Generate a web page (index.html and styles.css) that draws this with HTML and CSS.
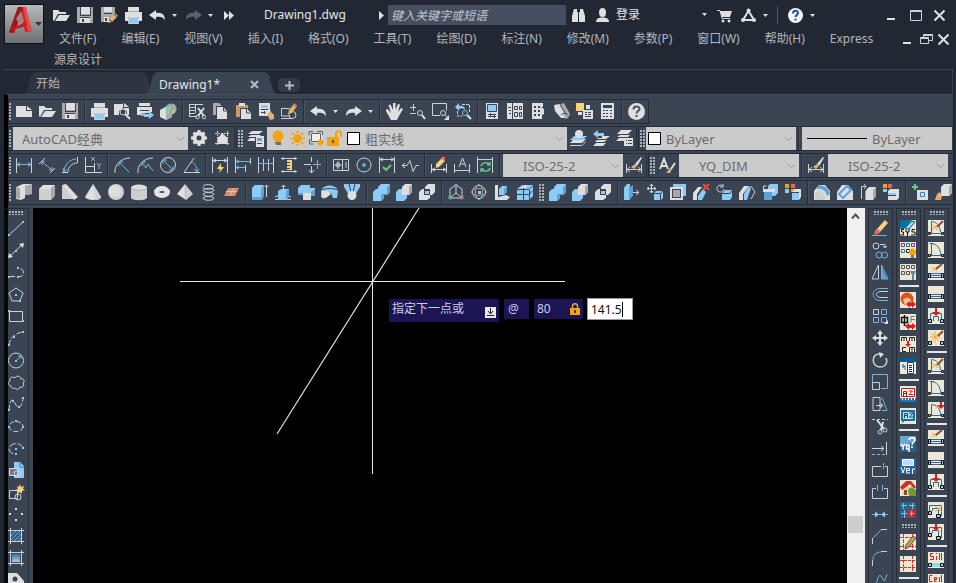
FILE: index.html
```html
<!DOCTYPE html>
<html lang="zh-CN">
<head>
<meta charset="utf-8">
<meta name="viewport" content="width=device-width, initial-scale=1">
<title>Drawing1.dwg</title>
<link rel="stylesheet" href="styles.css">
</head>
<body>
<svg class="sprite" aria-hidden="true">
  <defs>
    <linearGradient id="metal" x1="0" y1="0" x2="0" y2="1"><stop offset="0" stop-color="#b9b9bb"/><stop offset="1" stop-color="#6d6f72"/></linearGradient>
    <linearGradient id="sky" x1="0" y1="0" x2="0" y2="1"><stop offset="0" stop-color="#3d6f98"/><stop offset="1" stop-color="#a9cfe8"/></linearGradient>
  </defs>

  <!-- standard toolbar -->
  <symbol id="new" viewBox="0 0 17 17"><path class="fw" d="M0 3h10v5h6v6H0z"/><path class="fw" d="M11 3l5 4h-5z"/></symbol>
  <symbol id="open" viewBox="0 0 17 17"><path class="fw" d="M0 13V3h5l2 2h6v2H5L1 14z"/><path class="fw" d="M6 8h11l-4 6H2z"/></symbol>
  <symbol id="save" viewBox="0 0 17 17"><path class="fg" d="M0 0h16v16H0z"/><path class="fw" d="M4 0h9v7H4zM3 11h10v5H3z"/><path class="fd" d="M3 0h1v8h9V0h1v9H3zM3 10h10v1H3zM5 12h2v3H5z"/></symbol>
  <symbol id="saveas" viewBox="0 0 17 17"><path class="fg" d="M0 0h14v6l-7 9H0z"/><path class="fw" d="M3 0h8v5H3zM3 10h5v5H3z"/><path class="fd" d="M3 6h8v1H3zM4 11h2v3H4z"/><path class="ft" d="M8 12l6-6 3 3-6 6-4 1z"/><path class="sd" d="M8 12l3 3M13 7l3 3"/></symbol>
  <symbol id="print" viewBox="0 0 17 17"><path class="fw" d="M3 0h11v4H3zM0 5h17v9h-3v-4H3v4H0z"/><path class="fg" d="M3 4h11v1H3z"/><path class="fb" d="M4 11h9v5H4z"/><path class="sw" d="M3.500 10.500h10v6h-10z"/></symbol>
  <symbol id="preview" viewBox="0 0 17 17"><path class="fw" d="M0 1h9v4h6v7h-2V8L9 5 5 8v4H0z"/><path class="fw" d="M10 0l5 4h-5z"/><circle class="sw" cx="9" cy="9" r="3"/><path class="sw2" d="M11 11l5 5"/></symbol>
  <symbol id="publish" viewBox="0 0 17 17"><path class="fw" d="M2 0h11v3H2zM0 4h15v5h-3v1H4v2H0z"/><path class="fd" d="M3 7h9v1H3z"/><path class="fg" d="M4 10h4v3H4z"/><path class="fb" d="M7 11h5V8l5 4-5 4v-2H7z"/></symbol>
  <symbol id="globe" viewBox="0 0 17 17"><path class="fw" d="M0 7l7-4 5 3v8l-6 3-6-3z"/><path class="fg" d="M6 9l6-3v8l-6 3z"/><circle cx="11" cy="6" r="5.500" fill="#8fc9b0"/><path d="M8 3l4-1 1 3-3 3 1 3M14 4l2 3" stroke="#d07b63" fill="none"/><path class="sb" d="M6 5c3-3 6-4 9-3"/></symbol>
  <symbol id="cut" viewBox="0 0 17 17"><path class="sw" d="M0 1.500h14M0 4.500h6M0 7.500h6M0 10.500h6M0 13.500h8M.5 1v13M6.500 1v9"/><path class="sw2" d="M9 5l6 8M15 5l-6 8"/><circle class="sw" cx="8.500" cy="14" r="1.800"/><circle class="sw" cx="15" cy="14" r="1.800"/></symbol>
  <symbol id="copy" viewBox="0 0 17 17"><path class="fg" d="M1 0h6l3 3v9H1z"/><path class="fw" d="M5 4h6l4 4v8H5z"/><path class="sd" d="M4.500 13V3.500h6l1 1v3.500h4"/></symbol>
  <symbol id="paste" viewBox="0 0 17 17"><path d="M1 2h12v12H1z" fill="#c99a68"/><path class="fw" d="M4 0h6v3H4zM6 6h6l4 4v6H6z"/><path class="sd" d="M5.500 16V5.500h7M11.500 6v4h4"/></symbol>
  <symbol id="match" viewBox="0 0 17 17"><path class="fw" d="M1 0h11v13H1z"/><path class="fb" d="M3 2h7v3H3z"/><path class="sd" d="M2.500 6.500h8M3 9.500h5M6.500 8v3"/><path class="ft" d="M9 11l3-3 4 4v4l-4 1z"/><path class="fw" d="M7 9l4-3 2 2-4 3z"/></symbol>
  <symbol id="blockedit" viewBox="0 0 17 17"><path class="sw" d="M.5 5.500h8M.5 5v8h8M0 15.500h10"/><circle class="sw" cx="11.500" cy="12" r="3.500"/><path class="ft" d="M8 7l5-6 3 2-5 7-4 1z"/><path class="fr" d="M13 0l3 2-1 2-3-2z"/></symbol>
  <symbol id="undo" viewBox="0 0 17 17"><path class="fw" d="M0 8l7-5v3c6-1 9 2 9 7-2-3-5-4-9-3v3z"/></symbol>
  <symbol id="redo" viewBox="0 0 17 17"><path class="fw" d="M17 8l-7-5v3c-6-1-9 2-9 7 2-3 5-4 9-3v3z"/></symbol>
  <symbol id="redo-off" viewBox="0 0 17 17"><path d="M17 8l-7-5v3c-6-1-9 2-9 7 2-3 5-4 9-3v3z" fill="#596270"/></symbol>
  <symbol id="caret" viewBox="0 0 7 17"><path class="fw" d="M1 7h5L3.500 10z"/></symbol>
  <symbol id="more" viewBox="0 0 17 17"><path class="fw" d="M3 4l5 4.500L3 13zM8 4l5 4.500L8 13z"/></symbol>
  <symbol id="pan" viewBox="0 0 17 17"><path class="fw" d="M5 17L1 10-.5 7l2-1L5 10 2.500 2l2-.5L7 7V0h2.500v7L12 1l2 .5L12 9l3-4 2 1-4 7-2 4z"/></symbol>
  <symbol id="zoomrt" viewBox="0 0 17 17"><path class="sw" d="M1 4.500h6M4.500 1v7M1 10.500h6"/><circle class="sw" cx="11" cy="10" r="2.500"/><path class="sw2" d="M13 12l3 4"/></symbol>
  <symbol id="zoomwin" viewBox="0 0 17 17"><path class="sw" d="M8 12.500H.5V.5h14v7"/><circle class="sw" cx="11" cy="10" r="2.500"/><path class="sw" d="M13 12l3 3"/><path class="fw" d="M17 12v5h-5z"/></symbol>
  <symbol id="zoomprev" viewBox="0 0 17 17"><path class="fb" d="M0 4l4-4v3c4-1 6 1 6 4-2-2-4-2-6-1v2z"/><path class="sw" d="M7 1.500h8M14.500 2v8M2.500 8v5h5" stroke-dasharray="3 1"/><circle class="sb" cx="10" cy="10" r="2.500"/><path class="sw2" d="M12 12l4 4"/></symbol>
  <symbol id="props" viewBox="0 0 17 17"><path class="fw" d="M2 0h12v16H2z"/><path class="fb" d="M4 2h8v6H4z"/><path class="sd" d="M3.500 1.500h9v7h-9zM4 11.500h8M4 13.500h8M6.500 10v3M10.500 12v3"/></symbol>
  <symbol id="dcenter" viewBox="0 0 17 17"><path class="fw" d="M0 0h5v16H0zM6 0h10v16H6z"/><path class="sd" d="M1 4.500h3M2 7.500h2M2 10.500h2M7.500 3.500h3v3h-3zM12.500 3.500h2v3h-2zM7.500 9.500h3v4h-3zM12.500 9.500h2v4h-2z"/></symbol>
  <symbol id="palettes" viewBox="0 0 17 17"><path class="fw" d="M2 0h11v4h-2l3 2v5l-2 1v4H2z"/><path class="fd" d="M4 3h2v2H4zM8 3h2v2H8zM4 7h2v2H4zM8 7h2v2H8zM4 11h2v2H4zM8 11h2v2H8z"/></symbol>
  <symbol id="sheet" viewBox="0 0 17 17"><path class="fw" d="M1 2l6-1 6 8v6H8L2 8z"/><path class="fg" d="M8 1l3-1 6 11-2 4-3 1z"/><path class="sd" d="M7 2l6 9M8 12c2-2 5-2 7 0"/></symbol>
  <symbol id="markup" viewBox="0 0 17 17"><path class="fy" d="M0 0h8v8H0z"/><path class="fw" d="M2 9h4v3H2zM10 2h4v4h-4zM7 7h10v9H7z"/><path class="sd" d="M9 9.500h2M12 9.500h3M9 11.500h2M12 11.500h3M9 13.500h6"/></symbol>
  <symbol id="calc" viewBox="0 0 17 17"><path class="fw" d="M2 0h13v16H2z"/><path class="fd" d="M4 2h9v3H4zM4 7h2v1H4zM7 7h2v1H7zM11 7h2v1h-2zM4 10h2v1H4zM7 10h2v1H7zM11 10h2v1h-2zM4 13h2v1H4zM7 13h2v1H7zM11 13h2v1h-2z"/></symbol>
  <symbol id="help" viewBox="0 0 17 17"><circle class="fw" cx="8.500" cy="8.500" r="8.500"/><path d="M5.500 6.500c0-4 6-4 6-.5 0 2-3 2.200-3 4.500M8.500 12v2" stroke="#4b5260" stroke-width="2" fill="none"/></symbol>

  <!-- layers -->
  <symbol id="gear" viewBox="0 0 17 17"><circle cx="8" cy="8" r="4.500" stroke="#dfdfdf" stroke-width="4" fill="none"/><path d="M8 0v4M8 12v4M0 8h4M12 8h4M2.500 2.500l3 3M10.500 10.500l3 3M13.500 2.500l-3 3M5.500 10.500l-3 3" stroke="#dfdfdf" stroke-width="3"/></symbol>
  <symbol id="snap" viewBox="0 0 17 17"><path class="sw" d="M3.500 1v15M13.500 1v15M1 3.500h15M1 13.500h15" stroke-dasharray="2 1"/><path class="fw" d="M8.500 3l5 5v6h-10V8z"/></symbol>
  <symbol id="layerprops" viewBox="0 0 17 17"><path class="fw" d="M5 1h11l-4 3H1zM4 5h10l-2 2H1zM3 8h5v3H0z"/><path class="fw" d="M9 6h8v11H9z"/><path class="fm" d="M10 8h5v3h-5z"/><path class="sd" d="M10 13.500h5"/></symbol>
  <symbol id="bulb" viewBox="0 0 17 17"><circle class="fo" cx="8" cy="6" r="5.500"/><path class="fo" d="M5 9h6v3H5z"/><path d="M5 12h6v3H6z" fill="#687078"/></symbol>
  <symbol id="sun" viewBox="0 0 17 17"><circle class="fo" cx="8.500" cy="8.500" r="4.500"/><path class="so" d="M8.500 1v2M8.500 14v2M1 8.500h2M14 8.500h2M3 3l1.500 1.500M12.500 12.500L14 14M14 3l-1.500 1.500M4.500 12.500L3 14"/></symbol>
  <symbol id="vpfreeze" viewBox="0 0 17 17"><path d="M3 3h11v8H3z" fill="#eee"/><path d="M1 5.500V1.500h4M9 1.500h5.500V5M1.500 9v5h4M3.500 3.500h9v8h-9z" stroke="#57606c" fill="none"/><circle class="fo" cx="12.500" cy="12.500" r="3"/></symbol>
  <symbol id="unlock" viewBox="0 0 17 17"><path class="fo" d="M0 7h12v9H0z"/><path d="M9 7V3.500c0-3 5-3 5 0V7" stroke="#f2a20c" stroke-width="2" fill="none"/><path d="M5 10h2v3H5z" fill="#6b521c"/></symbol>
  <symbol id="swatch" viewBox="0 0 17 17"><path d="M1.500 2.500h12v12h-12z" fill="#fff" stroke="#000"/></symbol>
  <symbol id="laycur" viewBox="0 0 17 17"><path class="fw" d="M4 9h12l-4 4H0z"/><path class="fb" d="M4 6h13l-4 4H0z"/><circle class="fw" cx="9" cy="4" r="4"/><path class="sw" d="M0 15.500h12l4-4"/></symbol>
  <symbol id="layprev" viewBox="0 0 17 17"><path class="fb" d="M0 4l5-4v3h6v3H5v2z"/><path class="fw" d="M9 6h8l-4 3H4l1-1h4zM4 10h10l-3 2H2zM3 13h10l-3 3H0z"/></symbol>
  <symbol id="laystate" viewBox="0 0 17 17"><path class="fw" d="M5 0h11l-4 4H1zM4 5h10l-2 2H1zM3 8h5v3H0z"/><path class="fw" d="M8 8h9v8H8z"/><path class="sd" d="M10 10.500h1M12 10.500h4M10 13.500h1M12 13.500h4"/></symbol>

  <!-- dimensions -->
  <symbol id="dlin" viewBox="0 0 17 17"><path class="sw" d="M.5 1v15M15.500 1v15"/><path class="sb" d="M1 7.500h14M4 5.500l-3 2 3 2M12 5.500l3 2-3 2"/></symbol>
  <symbol id="dali" viewBox="0 0 17 17"><path class="sw" d="M0 7l6-6M11 16l5-5"/><path class="sb" d="M3 5l10 8M6 4L3 5v3M13 10v3h-3"/></symbol>
  <symbol id="darc" viewBox="0 0 17 17"><path class="sw" d="M0 15.500h6M15.500 0v6M6 15c0-5 4-9 9-9"/><path class="sb" d="M2 15C2 8 8 2 14 2M1 11l1 4 3-3"/></symbol>
  <symbol id="dord" viewBox="0 0 17 17"><path class="sw" d="M.5 0v15.500H17M.5 9.500H10M9.500 6v10"/><path class="sb" d="M6 0l4 4M10 0L6 4M12 6l2 3 2-3M14 9v3"/></symbol>
  <symbol id="drad" viewBox="0 0 17 17"><path class="sw" d="M1 16C0 8 7 1 16 1"/><path class="sb" d="M5 5l10 10M5 9V5h4"/></symbol>
  <symbol id="djog" viewBox="0 0 17 17"><path class="sw" d="M1 16C0 8 7 1 16 1"/><path class="sb" d="M5 5l4 6 2-4 5 7M5 9V5h4"/></symbol>
  <symbol id="ddia" viewBox="0 0 17 17"><circle class="sw" cx="8" cy="8" r="7.500"/><path class="sb" d="M3 3l10 10M3 7V3h4M9 13h4V9"/></symbol>
  <symbol id="dang" viewBox="0 0 17 17"><path class="sw" d="M11 1L1 15.500h16"/><path class="sb" d="M8 5c4 1 6 4 6 10M11 12l3 3 2-3"/></symbol>
  <symbol id="dquick" viewBox="0 0 17 17"><path class="sw" d="M.5 0v16M15.500 0v16M1 3.500h14M4 2L1 3.500 4 5M12 2l3 1.500L12 5"/><path class="fy" d="M9 6l-4 6h3l-1 4 5-6H9z"/></symbol>
  <symbol id="dbase" viewBox="0 0 17 17"><path class="sw" d="M.5 0v16M10.500 8v7M15.500 1v6"/><path class="sb" d="M1 4.500h14M1 10.500h9M4 3L1 4.500 4 6M4 9l-3 1.500L4 12"/></symbol>
  <symbol id="dcont" viewBox="0 0 17 17"><path class="sw" d="M.5 0v16M5.500 2v12M10.500 2v12M15.500 0v16"/><path class="sb" d="M1 6.500h14"/></symbol>
  <symbol id="dspace" viewBox="0 0 17 17"><path class="sw" d="M0 1.500h16M0 14.500h16M2 0v3M14 0v3M2 13v3M14 13v3"/><path class="fy" d="M6 3h5v10H6z"/><path class="sd" d="M6 5.500h3M6 8.500h3M6 11.500h3"/></symbol>
  <symbol id="dbreak" viewBox="0 0 17 17"><path class="sw" d="M7.500 0v5M7.500 9v7M0 7.500h7M10 7.500h7M5 13l2.500 3 2.500-3"/><path class="sb" d="M13.500 3v9M9 7.500h8"/></symbol>
  <symbol id="tol" viewBox="0 0 17 17"><path class="sw" d="M.5 2.500h15v11H.5zM9.500 2v12"/><circle class="sw" cx="5" cy="8" r="2"/><path class="sw" d="M5 4v8M1.500 8h7M13 5v6"/></symbol>
  <symbol id="cmark" viewBox="0 0 17 17"><circle class="sw" cx="8" cy="8" r="7"/><path class="sb2" d="M8 6v4M6 8h4"/></symbol>
  <symbol id="inspect" viewBox="0 0 17 17"><path class="sw" d="M.5 0v16M15.500 0v16M1 2.500h14M4 1L1 2.500 4 4M12 1l3 1.500L12 4"/><path d="M4 10l3 3 5-5" stroke="#62c98d" stroke-width="2" fill="none"/></symbol>
  <symbol id="jogline" viewBox="0 0 17 17"><path class="sw" d="M0 8.500h5l3-5 3 11 3-6h3M3 6L0 8.500 3 11"/></symbol>
  <symbol id="dedit" viewBox="0 0 17 17"><path class="sw" d="M.5 7v9M15.500 7v9M1 12.500h14M4 11l-3 1.500L4 14M12 11l3 1.500-3 1.500"/><path class="fy" d="M5 7l6-6 3 3-6 6-3 1z"/><path class="fr" d="M11 0h3v3l-1 1-3-3z"/></symbol>
  <symbol id="dtedit" viewBox="0 0 17 17"><path class="sw" d="M.5 7v9M15.500 7v9M1 13.500h14M5 10l3.500-9L12 10M6 7h5"/></symbol>
  <symbol id="dupdate" viewBox="0 0 17 17"><path class="sw" d="M.5 0v16M15.500 0v16M1 2.500h14"/><path d="M4 9c1-4 7-4 9-1M13 5v3h-3M13 11c-1 4-7 4-9 1M4 15v-3h3" stroke="#62c98d" stroke-width="1.500" fill="none"/></symbol>
  <symbol id="dstyle" viewBox="0 0 17 17"><path class="sw" d="M.5 7v9M15.500 7v9M1 12.500h14M4 10l-3 2.500L4 15M12 10l3 2.500-3 2.500"/><path class="fw" d="M9 7l6-7 1 1-5 8z"/><path class="ft" d="M5 10l4-3 2 2-3 3z"/></symbol>
  <symbol id="tstyle" viewBox="0 0 17 17"><path d="M1 12L5 2l4 10M2 9h6" class="sw2"/><path class="sw2" d="M16 6l-4 6"/><path class="ft" d="M7 16l4-5 2 1-2 4z"/></symbol>

  <!-- solids -->
  <symbol id="polysolid" viewBox="0 0 17 17"><path class="fw" d="M0 3l7-3h9v10l-7 1v3l-4 2-5-1z"/><path class="fg" d="M0 3l4 1v11l-4-1zM9 2l7-2v10l-7 1z"/></symbol>
  <symbol id="box" viewBox="0 0 17 17"><path class="fw" d="M0 5l4-4h12l-4 4z"/><path class="fl" d="M0 5h12v11H0z"/><path class="fg" d="M12 5l4-4v11l-4 4z"/></symbol>
  <symbol id="wedge" viewBox="0 0 17 17"><path class="fl" d="M0 1v14h12z"/><path class="fw" d="M0 1l4-1 12 13-4 3z"/></symbol>
  <symbol id="cone" viewBox="0 0 17 17"><path class="fw" d="M8 0L0 13c2 4 14 4 16 0z"/><path class="fl" d="M8 0l3 16c3 0 5-1 5-3z"/></symbol>
  <symbol id="sphere" viewBox="0 0 17 17"><circle class="fl" cx="8" cy="8" r="8"/><circle class="fw" cx="7" cy="7" r="6"/></symbol>
  <symbol id="cyl" viewBox="0 0 17 17"><path class="fl" d="M0 3v11c2 3 14 3 16 0V3z"/><ellipse class="fw" cx="8" cy="3.500" rx="8" ry="3"/><path class="sg" d="M0 4c2 3 14 3 16 0"/></symbol>
  <symbol id="torus" viewBox="0 0 17 17"><ellipse cx="8" cy="8" rx="5.500" ry="3.500" stroke="#e4e4e4" stroke-width="5" fill="none"/></symbol>
  <symbol id="pyr" viewBox="0 0 17 17"><path class="fw" d="M8 0L0 10l9 6z"/><path class="fl" d="M8 0l8 10-7 6z"/></symbol>
  <symbol id="helix" viewBox="0 0 17 17"><path class="sw" d="M3 2c4-3 12-1 10 2-2 2-11 1-10-1M3 6c0 3 11 3 11 0M3 6c2-2 9-2 11 0M3 10c0 3 11 3 11 0M3 10c2-2 9-2 11 0M3 14c0 3 11 3 11 0M3 14c2-2 9-2 11 0"/></symbol>
  <symbol id="planar" viewBox="0 0 17 17"><path d="M5 4h11l-4 8H1z" fill="#d88d66"/><path d="M3 7.500h11M11 4L7 12" stroke="#f0c1a6" fill="none"/></symbol>
  <symbol id="extrude" viewBox="0 0 17 17"><path class="fb" d="M0 4l3-3h9l-2 3z"/><path class="fm" d="M0 4h10l2-3v11l-2 4H0z"/><path class="fb" d="M0 4h9v9H0z"/><path class="sw" d="M14.500 13V1M12.500 3l2-2 2 2"/></symbol>
  <symbol id="presspull" viewBox="0 0 17 17"><path class="sw" d="M0 13l4-2M12 11l4 2M0 15.500h16"/><path class="fb" d="M3 7l3-2h8v8l-3 3H3z"/><path class="fm" d="M11 7l3-2v8l-3 3z"/><path class="sw" d="M8.500 8V1M6.500 3l2-2 2 2"/></symbol>
  <symbol id="sweep" viewBox="0 0 17 17"><path class="fb" d="M0 4l3-3h9v3h5v8h-4v4H5v-5H0z"/><path class="fm" d="M0 9h12l5-4v7h-4v4H5v-5H0z"/><path class="fw" d="M5 9h8v7H5z"/></symbol>
  <symbol id="revolve" viewBox="0 0 17 17"><path class="fb" d="M0 6C3 0 14 0 17 6l-1 8h-4l-2-5H7l-4 6-3-2z"/><path class="fw" d="M1 7h6l3 3-5 4-4-1z"/><path class="sd" d="M0 6c5-2 12-2 17 0"/></symbol>
  <symbol id="loft" viewBox="0 0 17 17"><path class="fb" d="M0 0h16v3l-5 8H5L0 3z"/><path class="sd" d="M5 0l2 8M11 0L9 8"/><circle class="fw" cx="8" cy="11.500" r="4.500"/></symbol>
  <symbol id="union" viewBox="0 0 17 17"><path class="fb" d="M5 3l3-3h9v8l-3 3h-3v3l-3 3H0V8l3-3h2z"/><path class="fm" d="M14 3l3-3v8l-3 3h-3v3l-3 3v-7h6z"/></symbol>
  <symbol id="subtract" viewBox="0 0 17 17"><path class="fb" d="M0 8l3-3h3v6h5v3l-3 3H0z"/><path class="fw" d="M6 3l3-3h7v8l-3 3H6z"/><path class="fg" d="M13 3l3-3v8l-3 3z"/></symbol>
  <symbol id="intersect" viewBox="0 0 17 17"><path class="fw" d="M6 3l3-3h7v8l-3 3h-2v3l-3 2H0V8l3-3h3z"/><path class="fd" d="M5 5h6v6H5z"/><path class="fb" d="M6 7h4v3H6z"/></symbol>
  <symbol id="ucs" viewBox="0 0 17 17"><path class="sw" d="M8 1L2 5v8M8 1l6 4v8M8 3v6l-6 5M8 9l6 5M3 14h10"/><circle class="sb" cx="8" cy="2" r="1.500"/><circle cx="2" cy="13.500" r="1.500" stroke="#6cc59a" fill="none"/><circle cx="14" cy="13.500" r="1.500" stroke="#e08080" fill="none"/></symbol>
  <symbol id="orbit" viewBox="0 0 17 17"><circle class="sw" cx="8" cy="8" r="6.500"/><ellipse cx="8" cy="8" rx="3.500" ry="7.500" stroke="#6cc59a" fill="none"/><ellipse cx="8" cy="8" rx="7.500" ry="3.500" stroke="#d98383" fill="none"/><path class="fb" d="M7 7h3v3H7z"/></symbol>
  <symbol id="flatshot" viewBox="0 0 17 17"><path class="fw" d="M1 1h3v12l8-2 4 2-3 3H1z"/><path class="fb" d="M5 5l3-3h5v6l-3 3H5z"/><path class="fm" d="M10 5l3-3v6l-3 3z"/></symbol>
  <symbol id="slice" viewBox="0 0 17 17"><path class="fb" d="M0 5l5-4h11v11l-4 4H0z"/><path class="sd" d="M0 5.500h12l4-4M12.500 6v10M6.500 1v15M0 10.500h12l4-4"/><path class="fw" d="M7 1h4L8 4H4z"/></symbol>
  <symbol id="extface" viewBox="0 0 17 17"><path class="fb" d="M0 4l3-4h3v16H0z"/><path class="fm" d="M5 4l4-3v11l-4 4z"/><path class="sw" d="M9 8.500h6M12 6l3 2.500-3 2.500"/></symbol>
  <symbol id="moveface" viewBox="0 0 17 17"><path class="sw" d="M4.500 0v9M0 4.500h9M3 2l1.500-2L6 2M3 7l1.500 2L6 7M2 3L0 4.500 2 6M7 3l2 1.500L7 6"/><path class="fb" d="M7 9l2-2h7v7l-2 2H7z"/><path class="sd" d="M7 9.500h7l2-3M13.500 10v6"/></symbol>
  <symbol id="offface" viewBox="0 0 17 17"><path class="fb" d="M3 0h13v12h-3V3H3z"/><path class="fw" d="M0 3h13v13H0z"/><path class="fd" d="M2 5h9v9H2z"/><path class="fg" d="M3 6h7v7H3z"/></symbol>
  <symbol id="delface" viewBox="0 0 17 17"><path class="fw" d="M0 9l5-6h4L4 10v6H0z"/><path class="fb" d="M5 12l5-7 3 3-4 8H5z"/><path d="M10 0l6 6M16 0l-6 6" stroke="#e64a45" stroke-width="2" fill="none"/></symbol>
  <symbol id="rotface" viewBox="0 0 17 17"><path class="sw" d="M7 2C3-1-1 4 2 7c2 2 5 1 6-2M7 0v3H4"/><path class="fb" d="M6 9l3-3h7v7l-2 3H6z"/><path class="sd" d="M6 9.500h8l2-3"/></symbol>
  <symbol id="taperface" viewBox="0 0 17 17"><path class="fw" d="M0 9l5-7h5L4 10v6H0z"/><path class="fb" d="M5 10l5-8 2 2-4 12H5z"/><path class="sw" d="M12 2l4 6-4 7"/></symbol>
  <symbol id="copyface" viewBox="0 0 17 17"><path class="fb" d="M6 2l2-2h8v9l-3 3H6z"/><path class="fw" d="M1 5h12v3H1z"/><path class="fm" d="M2 8h8v8H2z"/><path class="sw" d="M1.500 7V2h3"/></symbol>
  <symbol id="colface" viewBox="0 0 17 17"><path class="fr" d="M6 0h4v4H6z"/><path class="fo" d="M0 0h4v4H0zM6 5h4v3H6z"/><path class="fb" d="M0 5h4v4H0zM7 9h7v7H7z"/><path class="fw" d="M7 8l3-3h6v8l-2 3V8z"/></symbol>
  <symbol id="filedge" viewBox="0 0 17 17"><path class="fw" d="M0 7L5 1h6l5 6v9H0z"/><path class="fm" d="M4 2c6-2 11 3 12 8l-3 2C12 7 8 4 3 5z"/><path class="fl" d="M1 9l4-3c4 1 6 5 6 10H1z"/></symbol>
  <symbol id="chamedge" viewBox="0 0 17 17"><path class="fw" d="M0 8l5-7h6l5 6v9H0z"/><path class="sb2" d="M2 10l8-8 4 4-8 8z"/></symbol>
  <symbol id="copyedge" viewBox="0 0 17 17"><path class="fw" d="M6 6l3-3h7v9l-3 4H6z"/><path class="fg" d="M13 6l3-3v9l-3 4z"/><path class="sw" d="M1.500 15V2.500H6M4 0l2 2.500L4 5"/><path class="sb" d="M5.500 7v9"/></symbol>
  <symbol id="coledge" viewBox="0 0 17 17"><path class="fr" d="M5 0h4v4H5z"/><path class="fo" d="M0 0h4v4H0z"/><path class="fb" d="M0 5h4v3H0zM5 9h9v2H5z"/><path class="fw" d="M5 7l2-2h9v9l-2 2H5v-4h8V9H5z"/></symbol>
  <symbol id="imprint" viewBox="0 0 17 17"><path d="M3 0v6M0 3h6" stroke="#65cb87" stroke-width="2"/><path class="fw" d="M5 6h11v10H5z"/><path class="sm" d="M8.500 8.500h4v4h-4z"/></symbol>
  <symbol id="clean" viewBox="0 0 17 17"><path class="fw" d="M6 3l3-3h8v9l-3 3H6z"/><path class="fg" d="M14 3l3-3v9l-3 3z"/><path class="ft" d="M2 10l3-2 2 4-1 4H0z"/></symbol>

  <!-- draw -->
  <symbol id="line" viewBox="0 0 17 17"><path class="sw" d="M1 15L15 2"/><path class="fb" d="M0 14h2v2H0zM14 1h2v2h-2z"/></symbol>
  <symbol id="xline" viewBox="0 0 17 17"><path class="sw" d="M1 15L15 2"/><path class="fw" d="M0 16l1-5 4 4zM16 1l-5 1 4 4z"/><path class="fb" d="M7 8h2v2H7z"/></symbol>
  <symbol id="pline" viewBox="0 0 17 17"><path class="sw" d="M1 12.500h12c4-2 3-8-2-8" stroke-dasharray="6 2"/><path class="fb" d="M0 12h2v2H0zM9 12h2v2H9zM9 3h2v2H9z"/></symbol>
  <symbol id="polygon" viewBox="0 0 17 17"><path class="sw" d="M8 2l7 5-3 8H4L1 7z"/><path class="fb" d="M7 8h2v2H7zM11 14h2v2h-2z"/></symbol>
  <symbol id="rect" viewBox="0 0 17 17"><path class="sw" d="M1.500 3.500h13v10h-13z"/><path class="fb" d="M0 2h2v2H0zM14 12h2v2h-2z"/></symbol>
  <symbol id="arc" viewBox="0 0 17 17"><path class="sw" d="M1 15C2 8 7 3 15 2" stroke-dasharray="5 2"/><path class="fb" d="M0 14h2v2H0zM5 6h2v2H5zM14 1h2v2h-2z"/></symbol>
  <symbol id="circle" viewBox="0 0 17 17"><circle class="sw" cx="8" cy="8.500" r="7.500"/><path class="sb" d="M9 8l4-4M10 4h3v3"/><path class="fb" d="M7 8h2v2H7z"/></symbol>
  <symbol id="revcloud" viewBox="0 0 17 17"><path class="sw" d="M3 12c-3-1-3-4-1-5-1-4 3-5 5-3 1-3 6-2 6 1 3-1 4 3 2 4 2 3-1 5-3 4-1 3-4 3-5 1-2 1-4 0-4-2z"/></symbol>
  <symbol id="spline" viewBox="0 0 17 17"><path class="sw" d="M1 14C3-2 6 5 8 9s6 3 7-7" stroke-dasharray="5 2"/><path class="fb" d="M0 13h2v2H0zM4 4h2v2H4zM10 10h2v2h-2zM14 1h2v2h-2z"/></symbol>
  <symbol id="ellipse" viewBox="0 0 17 17"><ellipse class="sw" cx="8" cy="8.500" rx="7" ry="5" stroke-dasharray="5 2"/><path class="fb" d="M0 8h2v2H0zM7 2h2v2H7zM14 8h2v2h-2z"/></symbol>
  <symbol id="elarc" viewBox="0 0 17 17"><path class="sw" d="M15 8C13 2 2 2 1 9c0 3 3 5 7 5" stroke-dasharray="7 2"/><path class="fb" d="M7 8h2v2H7zM14 7h2v2h-2zM7 13h2v2H7z"/></symbol>
  <symbol id="insert" viewBox="0 0 17 17"><path class="fb" d="M6 0h6l4 4v12H6z"/><path d="M12 0v5h4" class="sm"/><path d="M1.500 6.500h8v7h-8z" fill="#737b87" stroke="#ddd"/><circle class="sw" cx="9.500" cy="12" r="3.500"/></symbol>
  <symbol id="block" viewBox="0 0 17 17"><path class="sw" d="M1.500 6.500h8v8h-8z"/><circle class="sw" cx="10" cy="13" r="3"/><path class="fy" d="M12 0l1 3 3-1-1 3 2 1-3 1v3l-2-2-3 2 1-3-3-1 3-1-1-3 2 1z"/></symbol>
  <symbol id="point" viewBox="0 0 17 17"><path class="fw" d="M7 2h2v2H7zM1 7h2v2H1zM13 7h2v2h-2zM7 13h2v2H7z"/></symbol>
  <symbol id="hatch" viewBox="0 0 17 17"><path d="M3 3h10v10H3z" fill="#31597c"/><path class="sb" d="M3 8l5-5M3 12l9-9M6 13l7-7M10 13l3-3"/><path class="sw" d="M2.500 0v16M13.500 0v16M0 2.500h16M0 13.500h16"/></symbol>
  <symbol id="gradient" viewBox="0 0 17 17"><path d="M4 4h8v8H4z" fill="url(#sky)"/><path class="sw" d="M2.500 0v16M13.500 0v16M0 2.500h16M0 13.500h16"/></symbol>
  <symbol id="region" viewBox="0 0 17 17"><path class="fw" d="M0 1h9l7 8v8H0z"/><circle class="fd" cx="7" cy="7" r="2.500"/></symbol>

  <!-- modify -->
  <symbol id="erase" viewBox="0 0 17 17"><path class="fy" d="M4 10l9-10 3 3-9 10z"/><path class="fr" d="M3 10l3-1 2 3-2 2-4 1z"/><path class="sb" d="M0 15.500h15"/></symbol>
  <symbol id="mcopy" viewBox="0 0 17 17"><circle class="sw" cx="4" cy="4" r="3"/><circle class="sb" cx="7" cy="13" r="3"/><circle class="sb" cx="12.500" cy="13" r="3"/><path class="sw" d="M8 2.500h5V6M11 4l2 2 2-2"/></symbol>
  <symbol id="mirror" viewBox="0 0 17 17"><path class="sw" d="M6.500 1v14H0z"/><path class="sb" d="M9.500 1v14H16z"/><path class="fm" d="M10 4v11h5z"/></symbol>
  <symbol id="offset" viewBox="0 0 17 17"><path class="sb" d="M16 2.500H8c-9 0-9 12 0 12h8"/><path class="sw" d="M16 5.500H9c-6 0-6 6 0 6h7"/></symbol>
  <symbol id="array" viewBox="0 0 17 17"><path class="sw" d="M1.500 1.500h5v5h-5z"/><path class="sb" d="M9.500 1.500h5v5h-5zM1.500 9.500h5v5h-5zM9.500 9.500h5v5h-5z"/><path class="fw" d="M16 12v4h-4z"/></symbol>
  <symbol id="move" viewBox="0 0 17 17"><path class="sw2" d="M8 2v12M1 8h14"/><path class="fw" d="M8 0l3 4H5zM8 16l3-4H5zM0 8l4-3v6zM16 8l-4-3v6z"/></symbol>
  <symbol id="rotate" viewBox="0 0 17 17"><path class="sw" d="M8 2C-1 1-1 15 8 15c6 0 8-5 6-9" stroke-width="1.500"/><path class="fw" d="M7 0l5 2-4 4z"/></symbol>
  <symbol id="scale" viewBox="0 0 17 17"><path class="sb" d="M.5 8V.5h15v14H9"/><path class="sw" d="M.5 8.500h7v7h-7z"/></symbol>
  <symbol id="stretch" viewBox="0 0 17 17"><path class="sw" d="M1 1.500h7v13H1zM4 9.500h7M8 7l3 2.500L8 12"/><path class="sb" d="M10 1.500l5 13h-5"/></symbol>
  <symbol id="trim" viewBox="0 0 17 17"><path class="sw" d="M0 1.500h16" stroke-dasharray="3 2"/><path class="sw2" d="M5 2l7 9M11 4L9 12"/><circle class="sw" cx="8" cy="14" r="2"/><circle class="sw" cx="13" cy="12" r="2"/></symbol>
  <symbol id="extend" viewBox="0 0 17 17"><path class="sw" d="M14.500 2v13M0 8.500h12M9 6l3 2.500L9 11"/><path class="sg" d="M0 14.500h14" stroke-dasharray="3 2"/></symbol>
  <symbol id="breakpt" viewBox="0 0 17 17"><path class="sw" d="M9 4.500H.5v10h15v-10H13"/><path class="sb" d="M11.500 1v6"/></symbol>
  <symbol id="break" viewBox="0 0 17 17"><path class="sw" d="M4 4.500H.5v10h15v-10H12"/><path class="sb" d="M5.500 1v6M10.500 1v6"/></symbol>
  <symbol id="join" viewBox="0 0 17 17"><path class="sb" d="M0 8.500h16"/><path class="fb" d="M7 8.500l-4-3v6zM9 8.500l4-3v6z"/></symbol>
  <symbol id="chamfer" viewBox="0 0 17 17"><path class="sb" d="M1 10L9 2"/><path class="sw" d="M.5 10v6M9 1.500h6"/></symbol>
  <symbol id="fillet" viewBox="0 0 17 17"><path class="sb" d="M1 10C1 5 4 2 9 2"/><path class="sw" d="M.5 10v6M9 1.500h6"/></symbol>
  <symbol id="blend" viewBox="0 0 17 17"><path class="sb" d="M0 13C6 16 5 0 9 4s2 10 6-2"/></symbol>

  <!-- add-in tiles -->
  <symbol id="tsys" viewBox="0 0 17 17"><path class="tile" d="M0 0h16v16H0z"/><path d="M0 0h12L4 9H0z" fill="#0c6f9c"/><path d="M5 8l7-7 3 1-6 7z" fill="#8fe0f2" stroke="#0c5b86"/><path d="M4 9.500H1.500V12h2v3H0M6 9v3h3V9M7.500 12v4M15 9.500h-3V12h3v3h-4" stroke="#111" fill="none"/></symbol>
  <symbol id="tlay" viewBox="0 0 17 17"><path class="tile" d="M0 0h16v16H0z"/><path d="M1.500 1.500h3v3h-3zM11.500 1.500h3v3h-3z" stroke="#a21fb0" fill="none"/><path d="M6.500 1.500h3v3h-3zM1.500 7.500h3v3h-3z" stroke="#15867a" fill="none"/><path d="M6.500 7.500h3v3h-3z" stroke="#222" fill="none"/><circle class="fo" cx="12.500" cy="10" r="3.500"/><path d="M11 13h3v3h-3z" fill="#777"/></symbol>
  <symbol id="tlay2" viewBox="0 0 17 17"><path class="tile" d="M0 0h16v16H0z"/><path d="M1.500 1.500h3v3h-3zM6.500 1.500h3v3h-3zM11.500 1.500h3v3h-3zM1.500 7.500h3v3h-3zM6.500 7.500h3v3h-3z" stroke="#555" fill="none"/><path d="M10 7h6l-2 4v5h-2v-5z" fill="#6a8795"/></symbol>
  <symbol id="tface" viewBox="0 0 17 17"><path class="tile" d="M0 0h16v16H0z"/><circle cx="7" cy="7" r="6.500" fill="#e0521b"/><path d="M3 8c3-3 5-3 8 0l-1 5H5z" fill="#f6c79a"/><path class="arr" d="M6 12l4-3v2h2V9l4 3-4 4v-2h-2v2z"/></symbol>
  <symbol id="tcn" viewBox="0 0 17 17"><path class="tile" d="M0 0h16v16H0z"/><path d="M1.500 3.500h6v5h-6zM4.500 1v11" stroke="#111" fill="none" stroke-width="1.500"/><path d="M15 2.500h-4v6M11 5.500h4" stroke="#777" fill="none"/><path class="arr" d="M5 12l4-3v2h3V9l4 3-4 4v-2H9v2z"/></symbol>
  <symbol id="tmm" viewBox="0 0 17 17"><path class="tile" d="M0 0h16v16H0z"/><path d="M1.500 5V1.500h5V5M4 2v3M9.500 5V1.500h5V5M12 2v3M6 11.500H2.500v4H6M9.500 16v-4.500h5V16M12 12v4" stroke="#222" fill="none"/><path class="arr" d="M7 5h2v3h2l-3 3-3-3h2z"/></symbol>
  <symbol id="tdoc" viewBox="0 0 17 17"><path class="tile" d="M0 0h16v16H0z"/><path d="M0 0h16v4H0z" fill="#0b5c94"/><path d="M7.500 4.500h6v11h-6z" stroke="#0b4c7c" fill="#fff"/><path d="M9 7.500h3M9 9.500h3M9 11.500h3M9 13.500h3" stroke="#222"/><path d="M5 12V8H2M4 6L2 8l2 2" stroke="#1c70b8" fill="none"/></symbol>
  <symbol id="taz" viewBox="0 0 17 17"><path class="tile" d="M0 0h16v16H0z"/><path d="M1.500 2.500h13v8h-13z" fill="#fff" stroke="#d11"/><path d="M3.500 10V5.500h3V10M3.500 7.500h3M8.500 5h4L9 8.500h4" stroke="#b11" fill="none"/><path d="M0 12h16v4H0z" fill="#1779c4"/><path d="M2.500 12v2M5.500 12v2M8.500 12v2M11.500 12v2M14.500 12v2" stroke="#fff"/></symbol>
  <symbol id="taz2" viewBox="0 0 17 17"><path class="tile" d="M0 0h16v16H0z"/><path d="M2 3h12v9H2z" fill="#b9e1f5" stroke="#1b6fa8" stroke-width="2"/><path d="M4.500 10V5.500h3V10M4.500 7.500h3M9 5h4L9.500 9H13M2 15l4-4" stroke="#174a70" fill="none"/></symbol>
  <symbol id="tyq" viewBox="0 0 17 17"><path d="M0 0h16v16H0z" fill="#285f95"/><path d="M0 0h16v5L0 11z" fill="#6ea6d4"/><path d="M9 4c0-3 6-3 6 0 0 2-3 2-3 5M12 10v2M1 8l2 3 2-3M3 11v3M9 9H6.500v4H9V8.500V16" stroke="#fff" stroke-width="1.500" fill="none"/></symbol>
  <symbol id="tver" viewBox="0 0 17 17"><path d="M0 0h16v16H0z" fill="#1c64a5"/><path d="M2.500 1.500h11v6h-11z" fill="#bcdcf2" stroke="#fff"/><path d="M1 9l2 6 2-6M10 12.500H6.500V15H10M6.500 12V10.500h3v2M12.500 16v-5H15" stroke="#fff" fill="none"/></symbol>
  <symbol id="thome" viewBox="0 0 17 17"><path class="tile" d="M0 0h16v16H0z"/><path d="M2 8l4-4 5 4v7H2z" fill="#e7d4ae"/><path d="M0 7l6-6h5l5 6-2 2-4-5-8 6z" fill="#c83321"/><path d="M8 10l3-3 5 3v6H9z" fill="#6f9936"/><path d="M4 10h3v5H4z" fill="#8f4c2a"/></symbol>
  <symbol id="tgrid" viewBox="0 0 17 17"><path d="M0 0h16v16H0z" fill="#2c6288"/><path d="M8 8h7v7H8z" fill="#c82d32"/><path d="M1 3.500h6M3.500 1v6M9 3.500h6M12.500 1v6M1 11.500h6M4.500 8v8" stroke="#8cbcd8"/><path d="M10 11.500h4M11.500 9v5" stroke="#e9a6a6"/></symbol>
  <symbol id="tpen" viewBox="0 0 17 17"><path class="tile" d="M0 0h16v16H0z"/><path d="M3.500 0v16M12.500 0v16M0 3.500h16M0 12.500h16" stroke="#e0332c" stroke-dasharray="4 1"/><path d="M6 11l7-9 3 2-7 9-4 2z" fill="#c9a04c" stroke="#555"/></symbol>
  <symbol id="taxis" viewBox="0 0 17 17"><path class="tile" d="M0 0h16v16H0z"/><path d="M3.500 0v16M12.500 0v16M0 4.500h16M0 11.500h16" stroke="#dd2a25" stroke-dasharray="3 1"/></symbol>
  <symbol id="wdoor" viewBox="0 0 17 17"><path class="tile" d="M0 0h16v16H0z"/><path class="wall" d="M3.500 14V1.500C9 2 12 6 12.500 12M3 13.500h10"/><path class="star" d="M4 5l6 5M10 4l-6 6"/><path d="M9 7l6-6" stroke="#914b25" stroke-width="2"/><path class="blk" d="M.5 12.500h2v2h-2zM13.500 12.500h2v2h-2z"/></symbol>
  <symbol id="door" viewBox="0 0 17 17"><path class="tile" d="M0 0h16v16H0z"/><path class="wall" d="M3.500 14V1.500C9 2 12 6 13 13M1.500 1.500H6M4 13.500h9"/><path class="blk" d="M.5 12.500h2v2h-2zM13.500 12.500h2v2h-2z"/></symbol>
  <symbol id="wwin" viewBox="0 0 17 17"><path class="tile" d="M0 0h16v16H0z"/><path class="wall" d="M2 9.500h12M2 11.500h12M2 13.500h12"/><path class="star" d="M4 3l5 4M9 3L4 7"/><path d="M8 5l6-5" stroke="#914b25" stroke-width="2"/><path class="blk" d="M.5 9.500h2v4h-2zM13.500 9.500h2v4h-2z"/></symbol>
  <symbol id="win" viewBox="0 0 17 17"><path class="tile" d="M0 0h16v16H0z"/><path class="wall" d="M2 8.500h12M2 10.500h12M2 12.500h12"/><path class="blk" d="M.5 8.500h2v4h-2zM13.500 8.500h2v4h-2z"/></symbol>
  <symbol id="bay" viewBox="0 0 17 17"><path class="tile" d="M0 0h16v16H0z"/><path class="wall" d="M2.500 13V5.500h11V13M5.500 13V8.500h5V13"/><path class="arr" d="M7 0h2v4h3L8 8 4 4h3z"/><path class="blk" d="M.5 11.500h3v3h-3zM12.500 11.500h3v3h-3z"/></symbol>
  <symbol id="spark" viewBox="0 0 17 17"><path class="tile" d="M0 0h16v16H0z"/><path class="star" d="M3 3l8 8M11 3l-8 8M7 1v12M2 7h10"/><path d="M10 6l5-5" stroke="#914b25" stroke-width="2"/><path class="blk" d="M.5 11.500h3v3h-3zM12.500 11.500h3v3h-3z"/></symbol>
  <symbol id="doorred" viewBox="0 0 17 17"><path class="tile" d="M0 0h16v16H0z"/><path class="wall" d="M3.500 14V2.500C9 3 12 6 13 14M4 13.500h9"/><path class="arr" d="M12 0h2v3h3l-4 4-4-4h3z"/><path class="blk" d="M.5 12.500h2v2h-2zM13.500 12.500h2v2h-2z"/></symbol>
  <symbol id="corner" viewBox="0 0 17 17"><path class="tile" d="M0 0h16v16H0z"/><path class="wall" d="M1.500 9V3.500h12V14M4.500 9V6.500h6V13"/><path class="star" d="M7 4l7 6M14 4L7 10"/><path class="blk" d="M.5 9.500h3v3h-3zM8.500 12.500h4v3h-4z"/></symbol>
  <symbol id="cornerred" viewBox="0 0 17 17"><path class="tile" d="M0 0h16v16H0z"/><path class="wall" d="M1.500 9V3.500h12V14M4.500 9V6.500h6V13"/><path class="arr" d="M7 0h2v3h3L8 7 4 3h3z"/><path class="blk" d="M.5 9.500h3v3h-3zM8.500 12.500h4v3h-4z"/></symbol>
  <symbol id="sill" viewBox="0 0 17 17"><path class="tile" d="M0 0h16v16H0z"/><path d="M5 1.500H2.500v3h3v3H2M8.500 4v4M8.500 1v1M11.500 1v7M13.500 1v7" stroke="#d02020" fill="none"/><path d="M3 11h10v4H3z" fill="#8fd8ee"/><path class="blk" d="M.5 11.500h3v3h-3zM12.500 11.500h3v3h-3z"/></symbol>
  <symbol id="ceil" viewBox="0 0 17 17"><path class="tile" d="M0 0h16v16H0z"/><path d="M4.500 1.500h-3v6h3M8.500 7.500h-2v-4h2v2h-2M11.500 3v5M13.500 1v7" stroke="#d02020" fill="none"/></symbol>

  <!-- title bar -->
  <symbol id="binoc" viewBox="0 0 17 17"><path class="fw" d="M4 2h3v3h1v10H2V9zM13 2h-3v3H9v10h6V9z"/><path d="M8 5h1v10H8z" fill="#222833"/></symbol>
  <symbol id="user" viewBox="0 0 17 17"><ellipse class="fw" cx="8.500" cy="5.500" rx="3.500" ry="4.500"/><path class="fw" d="M2 15c0-3 2-4 5-4.500h3c3 .5 5 1.500 5 4.500z"/></symbol>
  <symbol id="cart" viewBox="0 0 17 17"><path class="sw" d="M1 3.500h3l2 8h8"/><path class="fw" d="M4 4h12l-2 6H6z"/><circle class="fw" cx="7" cy="14" r="1.500"/><circle class="fw" cx="13" cy="14" r="1.500"/></symbol>
  <symbol id="nodes" viewBox="0 0 17 17"><path class="sw2" d="M8.500 4L3 13h11z"/><circle class="fw" cx="8.500" cy="3.500" r="2"/><circle class="fw" cx="3" cy="13" r="2"/><circle class="fw" cx="14" cy="13" r="2"/></symbol>
  <symbol id="helpblue" viewBox="0 0 17 17"><circle fill="#f1f5fb" cx="8.500" cy="8.500" r="7.500"/><path d="M6 6.500C6 3 11 3 11 6c0 2-2.500 2.200-2.500 4M8.500 11.500v2" stroke="#2d4f94" stroke-width="2" fill="none"/></symbol>
  <symbol id="min" viewBox="0 0 17 17"><path class="fw" d="M4 11h8v2H4z"/></symbol>
  <symbol id="max" viewBox="0 0 17 17"><path class="sw" d="M3.500 4.500h11v9h-11zM3 3.500h12"/></symbol>
  <symbol id="restore" viewBox="0 0 17 17"><path class="sw" d="M6.500 6V3.500h9v6h-4M3.500 7.500h8v5h-8zM3 6.500h9M6 4.500h9"/></symbol>
  <symbol id="close" viewBox="0 0 17 17"><path class="sw2" d="M3.500 3.500l10 10M13.500 3.500l-10 10"/></symbol>
  <symbol id="chev" viewBox="0 0 9 9"><path d="M1 3l3.500 3.500L8 3" stroke="#999" fill="none"/></symbol>
</svg>

<header class="header">
  <button class="logo" aria-label="应用程序菜单">
    <svg width="38" height="38" viewBox="0 0 38 38"><path d="M0 0h38v38H0z" fill="url(#metal)"/><path d="M13 2h7l7 25h-7L16 11 9 28H4z" fill="#d0282d"/><path d="M13 2h5l-3 9-6 17-5-1z" fill="#a3161c"/><path d="M18 2l3 0 6 25-4-1z" fill="#e8494b"/><path d="M5 24l16-7 1 4-15 4z" fill="#c31f25"/><path d="M11 14l5-8 3 11-5 1z" fill="#8d9093"/><path d="M14 15l3-4 1 5z" fill="#e2605c"/><path d="M30 17h7l-3.500 4z" fill="#333"/></svg>
  </button>
  <div class="header-main">
    <div class="titlebar">
      <div class="qat" data-tools="open save saveas print undo v redo-off v more"></div>
      <h1 class="title">Drawing1.dwg</h1>
      <div class="infocenter">
        <svg class="play" width="5" height="9" viewBox="0 0 5 9"><path class="fw" d="M0 0l5 4.500L0 9z"/></svg>
        <input class="search" type="search" aria-label="搜索" placeholder="键入关键字或短语">
        <div class="qat" data-tools="binoc user"></div>
        <button class="login"><span>登录</span><svg width="7" height="17"><use href="#caret"/></svg></button>
        <div class="qat" data-tools="cart nodes v"></div>
        <span class="divider"></span>
        <div class="qat" data-tools="helpblue v"></div>
      </div>
      <div class="qat window" data-tools="min max close"></div>
    </div>
    <nav class="menu">
      <button>文件(F)</button><button>编辑(E)</button><button>视图(V)</button><button>插入(I)</button><button>格式(O)</button><button>工具(T)</button><button>绘图(D)</button><button>标注(N)</button><button>修改(M)</button><button>参数(P)</button><button>窗口(W)</button><button>帮助(H)</button><button>Express</button>
      <div class="docwin" data-tools="min restore close"></div>
    </nav>
    <nav class="menu menu-extra"><button>源泉设计</button></nav>
  </div>
</header>

<div class="frame">
  <nav class="tabs">
    <button class="tab">开始</button>
    <div class="tab tab-active"><button>Drawing1*</button><button class="tab-close" aria-label="关闭"><svg width="9" height="9" viewBox="0 0 9 9"><path d="M1 1l7 7M8 1L1 8" stroke="#b5bac2" stroke-width="2"/></svg></button></div>
    <button class="tab-add" aria-label="新图形"><svg width="9" height="9" viewBox="0 0 9 9"><path d="M4.500 0v9M0 4.500h9" stroke="#b5bac2" stroke-width="2"/></svg></button>
  </nav>

  <div class="toolbars">
    <div class="row">
      <div class="bar" data-tools=": new open save | print preview publish globe | cut copy paste match blockedit | undo v redo v | pan zoomrt zoomwin zoomprev | props dcenter palettes sheet markup calc | help"></div>
    </div>
    <div class="row">
      <div class="bar"><i class="grip"></i>
        <div class="combo combo-space"><select aria-label="工作空间"><option>AutoCAD经典</option></select><svg class="chev"><use href="#chev"/></svg></div>
        <div class="set" data-tools="gear snap"></div>
      </div>
      <div class="bar"><i class="grip grip-wide"></i>
        <div class="set" data-tools="layerprops"></div>
        <div class="combo combo-layer"><svg width="17" height="17"><use href="#bulb"/></svg><svg width="17" height="17"><use href="#sun"/></svg><svg width="17" height="17"><use href="#vpfreeze"/></svg><svg width="17" height="17"><use href="#unlock"/></svg><svg width="17" height="17"><use href="#swatch"/></svg><select aria-label="图层"><option>粗实线</option></select><svg class="chev"><use href="#chev"/></svg></div>
        <div class="set" data-tools="laycur layprev laystate"></div>
      </div>
      <div class="bar bar-open"><i class="grip grip-wide"></i>
        <div class="combo combo-color"><svg width="17" height="17"><use href="#swatch"/></svg><select aria-label="颜色"><option>ByLayer</option></select><svg class="chev"><use href="#chev"/></svg></div>
        <i class="sep"></i>
        <div class="combo combo-ltype"><i class="ltype"></i><select aria-label="线型"><option>ByLayer</option></select></div>
      </div>
    </div>
    <div class="row">
      <div class="bar"><i class="grip"></i>
        <div class="set" data-tools="dlin dali darc dord | drad djog ddia dang | dquick dbase dcont dspace dbreak | tol cmark inspect jogline | dedit dtedit dupdate |"></div>
        <div class="combo combo-style"><select aria-label="标注样式"><option>ISO-25-2</option></select><svg class="chev"><use href="#chev"/></svg></div>
        <div class="set" data-tools="dstyle"></div>
      </div>
      <div class="bar bar-open"><i class="grip grip-wide"></i>
        <div class="set" data-tools="tstyle"></div>
        <div class="combo combo-style"><select aria-label="文字样式"><option>YQ_DIM</option></select><svg class="chev"><use href="#chev"/></svg></div>
        <div class="set" data-tools="| dstyle"></div>
        <div class="combo combo-style"><select aria-label="标注样式"><option>ISO-25-2</option></select><svg class="chev"><use href="#chev"/></svg></div>
      </div>
    </div>
    <div class="row">
      <div class="bar bar-open" data-tools=": polysolid box wedge cone sphere cyl torus pyr helix planar | extrude presspull sweep revolve loft | union subtract intersect | ucs orbit flatshot slice :: union subtract intersect | extface moveface offface delface rotface taperface copyface colface | filedge chamedge copyedge coledge | imprint clean"></div>
    </div>
  </div>

  <main class="work">
    <div class="column column-left" data-tools=": line xline pline polygon rect arc circle revcloud spline ellipse elarc insert block point hatch gradient region"></div>
    <section class="canvas">
      <svg class="drawing" role="img" aria-label="图形"><path d="M147 73.500H532M339.500 0V266" stroke="#e8e8e8"/><path d="M386 0L244 226" stroke="#e0e0e0" stroke-width="1.200"/></svg>
      <div class="prompt">
        <div class="prompt-box prompt-text"><span>指定下一点或</span><svg width="11" height="11" viewBox="0 0 11 11"><path d="M0 0h11v11H0z" fill="#e8e8ee"/><path d="M5.500 1v5M3 4l2.500 3L8 4M2 8.500h7" stroke="#222" fill="none"/></svg></div>
        <div class="prompt-box prompt-at">@</div>
        <div class="prompt-box prompt-len"><span>80</span><svg width="10" height="12" viewBox="0 0 10 12"><path d="M2.500 5V3c0-3 5-3 5 0v2" stroke="#e8a33a" stroke-width="1.500" fill="none"/><path d="M0 5h10v7H0z" fill="#f2a50f"/><path d="M4 7h2v3H4z" fill="#50380a"/></svg></div>
        <input class="prompt-input" aria-label="角度" value="141.5">
        <i class="cursor"></i>
      </div>
    </section>
    <div class="scroll"><button class="scroll-up" aria-label="向上滚动"><svg width="9" height="7" viewBox="0 0 9 7"><path d="M1 5.500l3.500-4 3.500 4" stroke="#555" stroke-width="2" fill="none"/></svg></button><i class="thumb"></i></div>
    <div class="column" data-tools=": erase mcopy mirror offset array move rotate scale stretch trim extend breakpt break join chamfer fillet blend"></div>
    <div class="column column-tiles" data-tools=": tsys tlay tlay2 | tface tcn tmm tdoc | taz taz2 | tyq tver thome tgrid :: tpen taxis |"></div>
    <div class="column column-tiles column-last" data-tools=": wdoor door wwin win bay spark | wdoor door doorred | wwin win bay | corner cornerred | sill ceil"></div>
  </main>
</div>
<script src="app.js"></script>
</body>
</html>
```
FILE: styles.css
```css
* { box-sizing: border-box; }
html, body { height: 100%; margin: 0; }
body {
  display: flex; flex-direction: column; overflow: hidden;
  background: #222833; color: #b2b5bb;
  font: 12px/18px "Noto Sans", "Noto Sans CJK SC", sans-serif;
}
button, input, select { font: inherit; color: inherit; border: 0; background: none; padding: 0; margin: 0; border-radius: 0; }
svg { display: block; flex: none; }
.sprite { position: absolute; width: 0; height: 0; }

/* icon paints */
.fw { fill: #dfdfdf; } .fl { fill: #cfcfcf; } .fg { fill: #a9a9a9; } .fd { fill: #3b4453; }
.fb { fill: #8ccbf5; } .fm { fill: #5ba3d6; } .fo { fill: #f5a20f; } .fy { fill: #fbd277; }
.fr { fill: #e8655a; } .ft { fill: #e0b070; }
.sw, .sw2, .sb, .sb2, .sg, .sd, .so, .sm { fill: none; }
.sw { stroke: #ccd1d8; } .sw2 { stroke: #e0e0e0; stroke-width: 2; }
.sb { stroke: #76b4e0; } .sb2 { stroke: #5aa5dc; stroke-width: 2; } .sm { stroke: #3186c6; }
.sg { stroke: #aab0b8; } .sd { stroke: #3b4453; } .so { stroke: #f5a20f; stroke-width: 2; }
.tile { fill: #ece8d6; } .arr { fill: #dc1c1c; }
.wall, .star { fill: none; }
.wall { stroke: #35679c; } .star { stroke: #f0a838; }
.blk { fill: #a8c4ea; stroke: #0b0f18; }

.header { display: flex; flex: none; }
.logo { width: 40px; height: 40px; margin: 4px 5px 0 4px; border: 1px solid #0c0e12; flex: none; }
.header-main { flex: 1; min-width: 0; }
.titlebar { display: flex; align-items: center; height: 30px; padding-right: 5px; }
.qat, .docwin { display: flex; }
.qat button { width: 24px; padding-left: 4px; }
.qat .mini { width: 12px; padding-left: 2px; }
.title { width: 115px; margin: 0 0 0 23px; font-size: 12px; font-weight: 400; color: #e3e5e8; }
.infocenter { display: flex; align-items: center; }
.play { margin-right: 4px; }
.search { width: 178px; height: 20px; padding-left: 3px; background: #464f60; color: #c3c8d0; font-style: italic; }
.search::placeholder { color: #c3c8d0; opacity: 1; }
.login { display: flex; justify-content: space-between; width: 92px; margin: 0 4px 0 2px; color: #e3e5e8; }
.divider { width: 1px; height: 18px; margin: 0 5px; background: #4d5563; }
.window { margin-left: auto; }

.menu { display: flex; align-items: center; gap: 25px; height: 18px; padding: 0 3px 0 10px; white-space: nowrap; }
.menu-extra { height: 21px; padding-left: 5px; align-items: flex-end; }
.docwin { flex: none; margin-left: auto; }
.docwin button { width: 18px; }

.frame { flex: 1; min-height: 0; display: flex; flex-direction: column; margin: 0 3px 0 4px; border: solid #3b4453; border-width: 1px 1px 0 0; }
.tabs { display: flex; height: 24px; padding-left: 20px; align-items: flex-end; }
.tab { width: 130px; height: 22px; padding: 2px 0 0 12px; text-align: left; background: #2e3541; clip-path: polygon(0 100%, 3px 85%, 7px 12%, 11px 0, 119px 0, 123px 12%, 127px 85%, 100% 100%); }
.tab-active { display: flex; align-items: center; margin-left: -8px; padding: 3px 17px 0 13px; justify-content: space-between; background: #3b4453; color: #e3e5e8; }
.tab-add { display: flex; align-items: center; justify-content: center; width: 22px; height: 14px; margin: 0 0 2px 2px; border-radius: 5px; background: #343b48; }

.toolbars { background: #3b4453; border-left: 4px solid #000; padding-top: 4px; height: 114px; overflow: hidden; border-top: 1px solid #434c5b; flex: none; }
.row { display: flex; gap: 1px; margin-bottom: 2px; }
.bar { display: flex; align-items: center; height: 25px; border: 1px solid #262d39; flex: none; }
.bar-open { flex: 1 0 0; min-width: 0; overflow: hidden; border-right: 0; }
.set { display: flex; }
.bar button { width: 23px; height: 23px; padding-left: 3px; flex: none; }
.bar .mini { width: 12px; padding-left: 2px; }
.sep { width: 2px; height: 23px; margin: 0 2px; background: #262d39; border-right: 1px solid #4b5464; flex: none; }
.grip { width: 3px; height: 17px; margin-right: 1px; flex: none; background: radial-gradient(circle at 1px 1px, #aab1bb 1px, transparent 1px) 0 0 / 3px 3px; }
.grip-wide { width: 5px; margin: 0 1px; }
.grip-mid { width: 5px; margin: 0 2px; }
.combo { position: relative; display: flex; align-items: center; height: 23px; background: #cbcbcb; color: #6c6c6c; flex: none; }
.combo select { flex: 1; min-width: 0; height: 23px; appearance: none; font-size: 13px; color: #6c6c6c; }
.chev { width: 9px; height: 9px; margin-right: 3px; }
.combo-space { width: 175px; padding-left: 9px; }
.combo-layer { width: 300px; padding-left: 3px; gap: 2px; }
.combo-color { width: 150px; padding-left: 1px; gap: 2px; }
.combo-ltype { flex: 1; padding-left: 5px; }
.ltype { width: 60px; height: 1px; margin-right: 5px; background: #000; }
.combo-style { width: 120px; padding-left: 20px; }

.work { flex: 1; min-height: 0; display: flex; background: #3b4453; }
.column { display: flex; flex-direction: column; align-items: center; width: 25px; margin-left: 3px; border: 1px solid #262d39; border-bottom: 0; overflow: hidden; flex: none; }
.column-left { margin: 0 4px 0 0; padding-right: 4px; border-left: 4px solid #05070a; }
.column button { height: 22px; padding: 3px 0 2px; flex: none; }
.column .grip { width: 14px; height: 4px; margin: 2px 0; }
.column .sep { width: 20px; height: 2px; margin: 2px 0; background: #e6e6e6; border: 0; }
.column .grip-mid { margin: 3px 0; }
.column-last { margin-right: 3px; }
.canvas { position: relative; flex: 1; min-width: 0; background: #000; overflow: hidden; }
.drawing { width: 100%; height: 100%; }
.prompt { position: absolute; left: 356px; top: 90px; display: flex; align-items: flex-start; gap: 5px; }
.prompt-box { display: flex; justify-content: space-between; height: 20px; margin-top: 1px; padding: 1px 3px; background: #1b1554; color: #cdcde4; border-radius: 1px; }
.prompt-text { width: 110px; height: 23px; }
.prompt-text svg { align-self: flex-end; margin-bottom: 3px; }
.prompt-at { width: 25px; padding-left: 4px; }
.prompt-len { width: 49px; align-items: center; }
.prompt-input { width: 46px; height: 22px; margin-left: -1px; padding-left: 3px; background: #fff; color: #111; border: 1px solid #999; }
.cursor { position: absolute; right: 10px; top: 4px; width: 1px; height: 15px; background: #000; }
.scroll { width: 18px; background: #f0f0f0; flex: none; }
.scroll-up { display: flex; align-items: center; justify-content: center; width: 17px; height: 17px; }
.thumb { display: block; height: 17px; margin: 291px 2px 0 1px; background: #cdcdcd; }
```
FILE: app.js
```js
// Fills each toolbar from its list: ":" and "::" are grips, "|" a separator, "v" a drop-down arrow.
document.querySelectorAll('[data-tools]').forEach(function (bar) {
  bar.dataset.tools.split(' ').forEach(function (name) {
    var el;
    if (name === '|' || name[0] === ':') {
      el = document.createElement('i');
      el.className = name === '|' ? 'sep' : name === ':' ? 'grip' : 'grip grip-mid';
    } else {
      var mini = name === 'v';
      el = document.createElement('button');
      el.setAttribute('aria-label', mini ? '更多' : name);
      if (mini) el.className = 'mini';
      el.innerHTML = '<svg width="' + (mini ? 7 : 17) + '" height="17"><use href="#' + (mini ? 'caret' : name) + '"/></svg>';
    }
    bar.appendChild(el);
  });
});
```
